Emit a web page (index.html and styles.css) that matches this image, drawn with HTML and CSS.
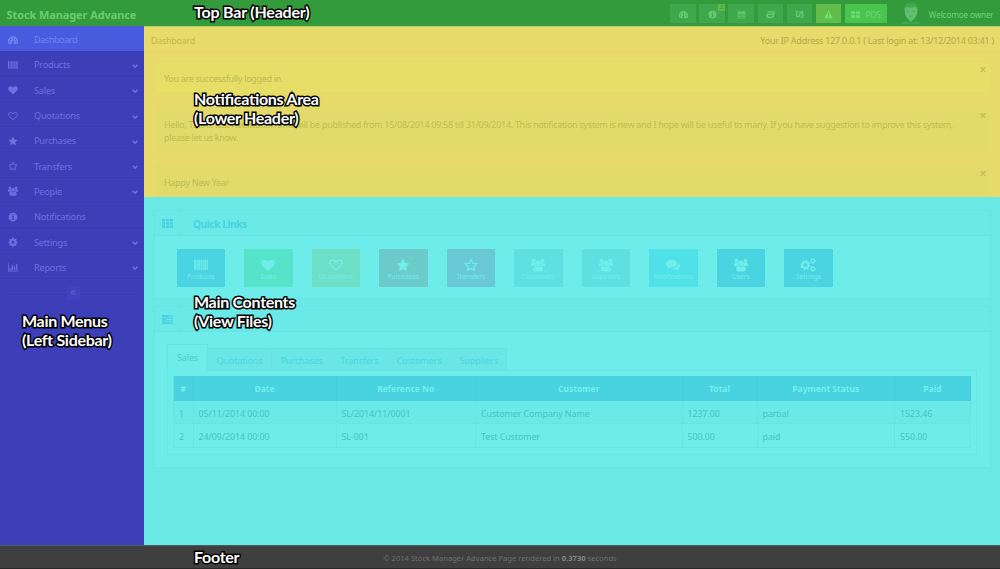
FILE: index.html
```html
<!DOCTYPE html>
<html lang="en">
<head>
<meta charset="utf-8">
<title>Stock Manager Advance</title>
<link rel="stylesheet" href="styles.css">
</head>
<body>
<svg class="defs" aria-hidden="true">
  <symbol id="dash" viewBox="0 0 16 16"><path fill-rule="evenodd" d="M8 2a8 8 0 0 0-7 12h14A8 8 0 0 0 8 2zM7 4h2v2H7zM3 6h2v2H3zM11 6h2v2h-2zM1.700 9.500h2v2h-2zM12.300 9.500h2v2h-2zM8.500 7l1 .3-.8 3.200a1.700 1.700 0 1 1-1.200-.2z"/></symbol>
  <symbol id="barcode" viewBox="0 0 16 16"><path fill-opacity=".35" d="M0 2h16v12H0z"/><path fill-opacity=".75" d="M0 2h2v12H0zM3 2h1v12H3zM5 2h2v12H5zM8 2h1v12H8zM10 2h1v12h-1zM12 2h2v12h-2zM15 2h1v12h-1z"/></symbol>
  <symbol id="heart" viewBox="0 0 16 16"><path d="M8 15L1.300 8.500C-2 4.500 3-1 8 4c5-5 10 .5 6.700 4.500z"/></symbol>
  <symbol id="heart-o" viewBox="0 0 16 16"><path fill="none" stroke="currentColor" stroke-width="1.500" d="M8 14L1.800 8C-1 4.500 3.500-.5 8 4.500c4.500-5 9 0 6.200 3.500z"/></symbol>
  <symbol id="star" viewBox="0 0 16 16"><path d="M8 .7l2.300 4.800 5.200.7-3.800 3.600 1 5.200L8 12.500 3.300 15l1-5.200L.5 6.200l5.200-.7z"/></symbol>
  <symbol id="star-o" viewBox="0 0 16 16"><path fill="none" stroke="currentColor" stroke-width="1.400" d="M8 1.700l2 4.200 4.500.6-3.300 3.200.8 4.500-4-2.200-4 2.200.8-4.500L1.500 6.500 6 5.900z"/></symbol>
  <symbol id="users" viewBox="0 0 16 16"><circle cx="3" cy="3" r="2.100"/><circle cx="13" cy="3" r="2.100"/><path d="M0 9V7q0-2 2-2 2 1 3 0-.8 2.500.7 4zM16 9V7q0-2-2-2-2 1-3 0 .8 2.500-.7 4zM2.300 13.500q0-4.500 3-4.500 2.700 2 5.400 0 3 0 3 4.500 0 2-2 2H4.300q-2 0-2-2z"/><circle cx="8" cy="6" r="3.100"/></symbol>
  <symbol id="info" viewBox="0 0 16 16"><path fill-rule="evenodd" d="M8 1a7 7 0 1 0 0 14A7 7 0 0 0 8 1zM7 3h2v2H7zM6 6.500h3.200V11H10v1.500H6V11h1V8H6z"/></symbol>
  <symbol id="cog" viewBox="0 0 16 16"><path fill-rule="evenodd" d="M6.800 1h2.400l.4 2 1.300.6L12.600 2.500l1.500 1.700L13 5.900l.5 1.100 1.700.4v2.300l-1.800.4-.5 1.200 1 1.600-1.600 1.600-1.700-1-1.100.5-.4 1.800H6.800L6.400 14l-1.300-.5-1.600 1-1.600-1.600 1-1.600-.5-1.200-1.800-.4V7.400L2.500 7 3 5.800 2 4.200l1.500-1.700 1.700 1.100L6.400 3zM8 5.800a2.500 2.500 0 1 0 0 5 2.500 2.500 0 0 0 0-5z"/></symbol>
  <symbol id="cogs" viewBox="0 0 18 16"><g fill="none" stroke="currentColor"><circle cx="6" cy="8" r="3.500" stroke-width="2.400"/><circle cx="6" cy="8" r="5.200" stroke-width="1.300" stroke-dasharray="2 2.080"/><circle cx="14.500" cy="3.500" r="2" stroke-width="1.400"/><circle cx="14.500" cy="3.500" r="3" stroke-width=".9" stroke-dasharray="1.350 1.350"/><circle cx="14.500" cy="12.500" r="2" stroke-width="1.400"/><circle cx="14.500" cy="12.500" r="3" stroke-width=".9" stroke-dasharray="1.350 1.350"/></g></symbol>
  <symbol id="chart" viewBox="0 0 16 16"><path d="M0 2h1.200v11.800H16V15H0zM2.500 9h2v4h-2zM6 5h2v8H6zM9.500 7h2v6h-2zM13 3h2v10h-2z"/></symbol>
  <symbol id="down" viewBox="0 0 16 16"><path fill="none" stroke="currentColor" stroke-width="3.800" d="M1.500 4.500L8 11l6.500-6.500"/></symbol>
  <symbol id="back" viewBox="0 0 16 16"><path fill="none" stroke="currentColor" stroke-width="2.400" d="M8 2L2 8l6 6M14 2L8 8l6 6"/></symbol>
  <symbol id="calendar" viewBox="0 0 16 16"><path fill-rule="evenodd" d="M1 3h2V1h2v2h6V1h2v2h2v12H1zM2.300 6.500v2h2.500v-2zM6 6.500v2h4v-2zM11.200 6.500v2h2.500v-2zM2.300 9.500v1.700h2.500V9.500zM6 9.500v1.700h4V9.500zM11.200 9.500v1.700h2.500V9.500zM2.300 12.200V14h2.500v-1.800zM6 12.200V14h4v-1.800zM11.200 12.200V14h2.500v-1.800z"/></symbol>
  <symbol id="css" viewBox="0 0 16 16"><path d="M3 2h13l-2 10.500L7.500 15 0 12.500.7 9h2.800l-.3 1.600 4.800 1.700 3.500-1.500.4-2H1.300L1.900 6.300h10.600l.3-1.800H2.500z"/></symbol>
  <symbol id="lang" viewBox="0 0 16 16"><path fill-rule="evenodd" d="M1 1l7 2 6-2v3l1 .5V15l-7-2.500L2 13zM3 4v2h2c0 2-1 3-2 4l1 1 2-2 1 1 .7-1-1-1 1-2H8V4H6V3H5v1zM10.500 5.500L8.500 12l1.300.4.400-1.400 1.800.6.500 1.500 1.200.4-2-7.500zM11 7.800l.6 2.300-1.100-.4z"/></symbol>
  <symbol id="warn" viewBox="0 0 16 16"><path fill-rule="evenodd" d="M8 .5L16 15H0zM7 5l.3 5h1.400L9 5zM7 11.300V13h2v-1.700z"/></symbol>
  <symbol id="thl" viewBox="0 0 16 16"><path d="M0 2h7v5H0zM8.500 2H16v5H8.500zM0 8.500h7v5.500H0zM8.500 8.500H16V14H8.500z"/></symbol>
  <symbol id="th" viewBox="0 0 16 16"><path d="M0 1.500h4.600v3.700H0zM5.700 1.500h4.600v3.700H5.700zM11.400 1.500H16v3.700h-4.600zM0 6.200h4.600v3.600H0zM5.700 6.200h4.600v3.600H5.700zM11.400 6.200H16v3.600h-4.600zM0 10.900h4.600v3.600H0zM5.700 10.900h4.600v3.600H5.700zM11.400 10.900H16v3.600h-4.600z"/></symbol>
  <symbol id="tasks" viewBox="0 0 16 16"><path fill-rule="evenodd" d="M0 1.500h16V5H0zM10 2.500V4h5V2.500zM0 6.300h16v3.500H0zM7 7.300v1.500h8V7.300zM0 11h16v3.500H0zM12 12v1.500h3V12z"/></symbol>
  <symbol id="comments" viewBox="0 0 16 16"><path d="M6.500 2C2.500 2 0 4 0 6.600c0 1.500.8 2.700 2.200 3.500L1.500 12.500l3-1.500C9 11.500 12.500 9.800 12.500 6.600 12.500 4 10 2 6.500 2zM13.700 5.500c.5 4-3.200 6.700-7.200 6.800 1.500 1 3.500 1.200 5.200.9l3 1.500-.8-2.300C16.700 10.700 16.600 7.500 13.700 5.500z"/></symbol>
</svg>

<header class="topbar">
  <div class="brand">Stock Manager Advance</div>
  <nav class="tools">
    <a class="tool"><svg><use href="#dash"/></svg></a>
    <a class="tool"><svg><use href="#info"/></svg><b class="badge">2</b></a>
    <a class="tool"><svg><use href="#calendar"/></svg></a>
    <a class="tool"><svg><use href="#css"/></svg></a>
    <a class="tool"><svg><use href="#lang"/></svg></a>
    <a class="tool alert-tool"><svg><use href="#warn"/></svg></a>
    <a class="tool pos"><svg><use href="#thl"/></svg><span>POS</span></a>
  </nav>
  <svg class="avatar" viewBox="0 0 20 22"><path fill="#3fa54b" d="M0 22q1-3 6-3l4 2 4-2q5 0 6 3z"/><path fill="#62bf70" d="M3.500 7q1-3 6.500-3t6.500 3l-.5 5q-1 4-3.500 5.500L10 20l-2.500-2.500Q5 16 4 12z"/><path fill="#41a84d" d="M3 9Q1.500 1 10 .5 18.500 1 17 9q-1-3-3-4-4 1-8 0-2 1-3 4z"/><path fill="#49a956" d="M5.500 8.500h3v1h-3zM11.500 8.500h3v1h-3zM8 14q2-1 4 0l-1 .6H9z"/></svg>
  <div class="welcome">Welcomoe owner</div>
</header>

<div class="shell">
  <aside class="sidebar">
    <a class="item active"><svg><use href="#dash"/></svg><span>Dashboard</span></a>
    <a class="item"><svg><use href="#barcode"/></svg><span>Products</span><svg class="chev"><use href="#down"/></svg></a>
    <a class="item"><svg><use href="#heart"/></svg><span>Sales</span><svg class="chev"><use href="#down"/></svg></a>
    <a class="item"><svg><use href="#heart-o"/></svg><span>Quotations</span><svg class="chev"><use href="#down"/></svg></a>
    <a class="item"><svg><use href="#star"/></svg><span>Purchases</span><svg class="chev"><use href="#down"/></svg></a>
    <a class="item"><svg><use href="#star-o"/></svg><span>Transfers</span><svg class="chev"><use href="#down"/></svg></a>
    <a class="item"><svg><use href="#users"/></svg><span>People</span><svg class="chev"><use href="#down"/></svg></a>
    <a class="item"><svg><use href="#info"/></svg><span>Notifications</span></a>
    <a class="item"><svg><use href="#cog"/></svg><span>Settings</span><svg class="chev"><use href="#down"/></svg></a>
    <a class="item"><svg><use href="#chart"/></svg><span>Reports</span><svg class="chev"><use href="#down"/></svg></a>
    <div class="collapse"><i><svg><use href="#back"/></svg></i></div>
  </aside>

  <main class="main">
    <section class="notices">
      <div class="crumbs"><span>Dashboard</span><span class="ip">Your IP Address 127.0.0.1 ( Last login at: 13/12/2014 03:41 )</span></div>
      <div class="notice success"><p>You are successfully logged in.</p><b>×</b></div>
      <div class="notice tall"><p>Hello, This is test notification and will be published from 15/08/2014 09:58 till 31/09/2014. This notification system is new and I hope will be useful to many. If you have suggestion to improve this system,<br>please let us know.</p><b>×</b></div>
      <div class="notice last"><p>Happy New Year</p><b>×</b></div>
    </section>

    <section class="content">
      <div class="panel">
        <div class="panel-head"><i><svg><use href="#th"/></svg></i><h2>Quick Links</h2></div>
        <div class="tiles">
          <a class="tile blue"><svg><use href="#barcode"/></svg><span>Products</span></a>
          <a class="tile green"><svg><use href="#heart"/></svg><span>Sales</span></a>
          <a class="tile olive"><svg><use href="#heart-o"/></svg><span>Quotations</span></a>
          <a class="tile brown"><svg><use href="#star"/></svg><span>Purchases</span></a>
          <a class="tile mauve"><svg><use href="#star-o"/></svg><span>Transfers</span></a>
          <a class="tile grey"><svg><use href="#users"/></svg><span>Customers</span></a>
          <a class="tile grey"><svg><use href="#users"/></svg><span>Suppliers</span></a>
          <a class="tile sky"><svg><use href="#comments"/></svg><span>Notifications</span></a>
          <a class="tile blue"><svg><use href="#users"/></svg><span>Users</span></a>
          <a class="tile blue"><svg class="wide"><use href="#cogs"/></svg><span>Settings</span></a>
        </div>
      </div>

      <div class="panel second">
        <div class="panel-head"><i><svg><use href="#tasks"/></svg></i></div>
        <div class="latest">
          <div class="tabs">
            <a class="tab current">Sales</a><a class="tab t2">Quotations</a><a class="tab t3">Purchases</a><a class="tab t4">Transfers</a><a class="tab t5">Customers</a><a class="tab t6">Suppliers</a>
          </div>
          <div class="tab-body">
            <table>
              <colgroup><col class="c1"><col class="c2"><col class="c3"><col class="c4"><col class="c5"><col class="c6"><col class="c7"></colgroup>
              <thead><tr><th>#</th><th>Date</th><th>Reference No</th><th>Customer</th><th>Total</th><th>Payment Status</th><th>Paid</th></tr></thead>
              <tbody>
                <tr class="odd"><td>1</td><td>05/11/2014 00:00</td><td>SL/2014/11/0001</td><td>Customer Company Name</td><td>1237.00</td><td>partial</td><td>1523.46</td></tr>
                <tr><td>2</td><td>24/09/2014 00:00</td><td>SL-001</td><td>Test Customer</td><td>500.00</td><td>paid</td><td>550.00</td></tr>
              </tbody>
            </table>
          </div>
        </div>
      </div>
    </section>
  </main>
</div>

<footer class="footer">© 2014 Stock Manager Advance Page rendered in <b>0.3730</b> seconds</footer>

<div class="label label-top">Top Bar (Header)</div>
<div class="label label-notes">Notifications Area<br>(Lower Header)</div>
<div class="label label-main">Main Contents<br>(View Files)</div>
<div class="label label-menu">Main Menus<br>(Left Sidebar)</div>
<div class="label label-foot">Footer</div>
</body>
</html>
```

FILE: styles.css
```css
* { box-sizing: border-box; }
body {
  margin: 0; width: 1000px; height: 569px; overflow: hidden; position: relative;
  display: flex; flex-direction: column;
  font: 9px/13px "Noto Sans", "Open Sans", sans-serif;
}
svg { fill: currentColor; width: 10px; height: 10px; flex: none; display: block; }
.defs { position: absolute; width: 0; height: 0; }
h2, p { margin: 0; }

.topbar { height: 26px; flex: none; background: #339b3b; color: #65cf70; display: flex; align-items: center; }
.brand { font-size: 11px; letter-spacing: -.1px; font-weight: 700; width: 670.3px; padding: 2px 0 0 6.500px; white-space: nowrap; }
.tools { display: flex; gap: 3.600px; padding-top: 1px; }
.tool { width: 25.500px; height: 19px; background: #3fa84c; color: #67c976; display: flex; align-items: center; justify-content: center; position: relative; }
.tool svg { width: 9px; height: 9px; margin-top: 1px; }
.alert-tool { background: #62bc49; color: #6fdc6c; }
.pos { width: 42px; background: #49c44c; color: #6bd96f; gap: 5px; font-size: 8.500px; letter-spacing: -.5px; }
.pos span { padding-top: 1px; }
.badge { position: absolute; right: 0; top: 0; width: 6.500px; height: 7px; background: #62bc49; color: #3b9f42; font-size: 6px; line-height: 7px; text-align: center; }
.avatar { width: 20px; height: 22px; margin-left: 14.500px; }
.welcome { margin-left: 7.500px; padding-top: 2px; font-size: 8.200px; letter-spacing: -.14px; white-space: nowrap; color: #6fd47a; }

.shell { flex: 1; display: flex; min-height: 0; }
.sidebar { width: 144px; background: #3d3fb9; color: #6d70e0; }
.item { height: 25.300px; display: flex; align-items: center; padding: 3px 6px 0 8px; border-bottom: 1px solid #393bb3; }
.item span { flex: 1; padding-left: 16px; font-size: 9.200px; letter-spacing: -.24px; }
.item .chev { width: 6px; height: 6px; margin-top: 2px; }
.active { background: #495cdf; color: #6f83ee; border-color: #495cdf; }
.active span { letter-spacing: -.5px; }
.collapse { height: 16px; margin: 7px 6px 0 8px; display: flex; justify-content: center; background: linear-gradient(#393bb0, #393bb0) 0 8px / 100% 1px no-repeat; }
.collapse i { width: 13px; height: 14px; background: #4043c0; display: flex; align-items: center; justify-content: center; }
.collapse svg { width: 6px; height: 7px; }

.main { width: 856px; display: flex; flex-direction: column; }
.notices { height: 171px; flex: none; background: #e8da6b; color: #c6b84f; border-top: 1px solid #b5cf60; overflow: hidden; letter-spacing: -.3px; }
.crumbs { height: 24.500px; display: flex; justify-content: space-between; align-items: center; padding: 3px 6px 0 7px; border-bottom: 1px solid #e5d769; }
.crumbs .ip { color: #b8a844; letter-spacing: -.25px; }
.notice { margin: 9.500px 9px 0 10px; height: 33px; border: 1px solid #e3da68; background: #e2db6b; color: #bebb55; display: flex; justify-content: space-between; padding: 10px 4px 0 9px; white-space: nowrap; }
.notice b { font-size: 12px; line-height: 10px; margin-top: -7px; color: #c8be5a; }
.success { background: #e6de66; }
.tall { height: 47px; margin-top: 11px; padding-top: 11.500px; }
.last { margin-top: 12px; height: 40px; padding-top: 11px; }

.content { flex: 1; background: #6ae8e6; padding: 13px 9px 0 10px; }
.panel { border: 1px solid #65e5e4; background: #6eecea; height: 89px; color: #48d2e0; }
.panel-head { height: 25px; background: #6be9e7; border-bottom: 1px solid #66e5e4; display: flex; align-items: center; }
.panel-head i { width: 25px; height: 100%; border-right: 1px solid #66e5e4; display: flex; align-items: center; justify-content: center; }
.panel-head svg { width: 11px; height: 11px; }
.panel-head h2 { font-size: 10.200px; letter-spacing: -.45px; line-height: 13px; padding: 2px 0 0 13px; }
.tiles { display: flex; gap: 19.030px; padding: 13px 0 0 21.500px; }
.tile { width: 48.500px; height: 38px; display: flex; flex-direction: column; align-items: center; padding-top: 8.500px; color: #70eeec; font-size: 6.600px; line-height: 9px; }
.tile svg { width: 14px; height: 14px; }
.tile svg.wide { width: 16px; }
.tile span { white-space: nowrap; }
.blue { background: #4ad3e1; }
.green { background: #55e3c9; }
.olive { background: #6ddfc6; }
.brown { background: #6bcaca; }
.mauve { background: #69c8d6; }
.grey { background: #60dfe0; }
.sky { background: #4fe0e8; }

.second { height: 161.500px; margin-top: 7px; }
.latest { padding: 12px 13px 0 12px; }
.tabs { display: flex; align-items: flex-end; position: relative; margin-bottom: -1px; }
.tab { height: 23px; width: 64px; background: #69e6e5; border: 1px solid #65e3e3; border-left-width: 0; text-align: center; padding-top: 4.500px; color: #4bd7df; font-size: 9px; letter-spacing: -.12px; }
.tab.current { width: 41px; height: 27px; padding-top: 6px; background: #6eecea; color: #4ccccc; border-left-width: 1px; border-bottom-color: #6eecea; }
.t3 { width: 60.500px; }
.t4 { width: 55px; }
.t5 { width: 64px; }
.t6 { width: 55.500px; }
.tab-body { border: 1px solid #67e5e4; height: 84.500px; padding: 5px 6px 0 5px; }
table { width: 797px; table-layout: fixed; border-collapse: separate; border-spacing: 0; border: 1px solid #67e5e4; border-width: 0 0 0 1px; }
.c1 { width: 19.500px; } .c2 { width: 143px; } .c3 { width: 139.500px; } .c4 { width: 206.500px; }
.c5 { width: 75px; } .c6 { width: 137.500px; } .c7 { width: 76px; }
th { height: 25px; padding: 0; background: #49d2df; color: #71f0ee; border-right: 1px solid #45cedb; font-size: 8.500px; }
td { height: 23.300px; padding: 2px 0 0 5px; color: #45c4c4; border-right: 1px solid #67e5e4; border-bottom: 1px solid #67e5e4; font-size: 8.900px; letter-spacing: -.08px; }
.odd td { background: #6be9e7; }

.footer { height: 24px; flex: none; background: #3f3f3f; color: #707070; border-top: 1px solid #4a6060; border-bottom: 1px solid #292929; text-align: center; font-size: 7.600px; line-height: 25px; }
.footer b { color: #858585; }

.label {
  position: absolute; font: 700 16px/19px Lato, sans-serif; letter-spacing: -.3px; font-feature-settings: "liga"; color: #fff; white-space: nowrap;
  -webkit-text-stroke: 3px #000; paint-order: stroke fill;
}
.label-top { left: 194px; top: 2px; letter-spacing: -.2px; }
.label-notes { left: 194px; top: 89px; }
.label-main { left: 194px; top: 292px; }
.label-menu { left: 22px; top: 311px; }
.label-foot { left: 194px; top: 547px; }
```
